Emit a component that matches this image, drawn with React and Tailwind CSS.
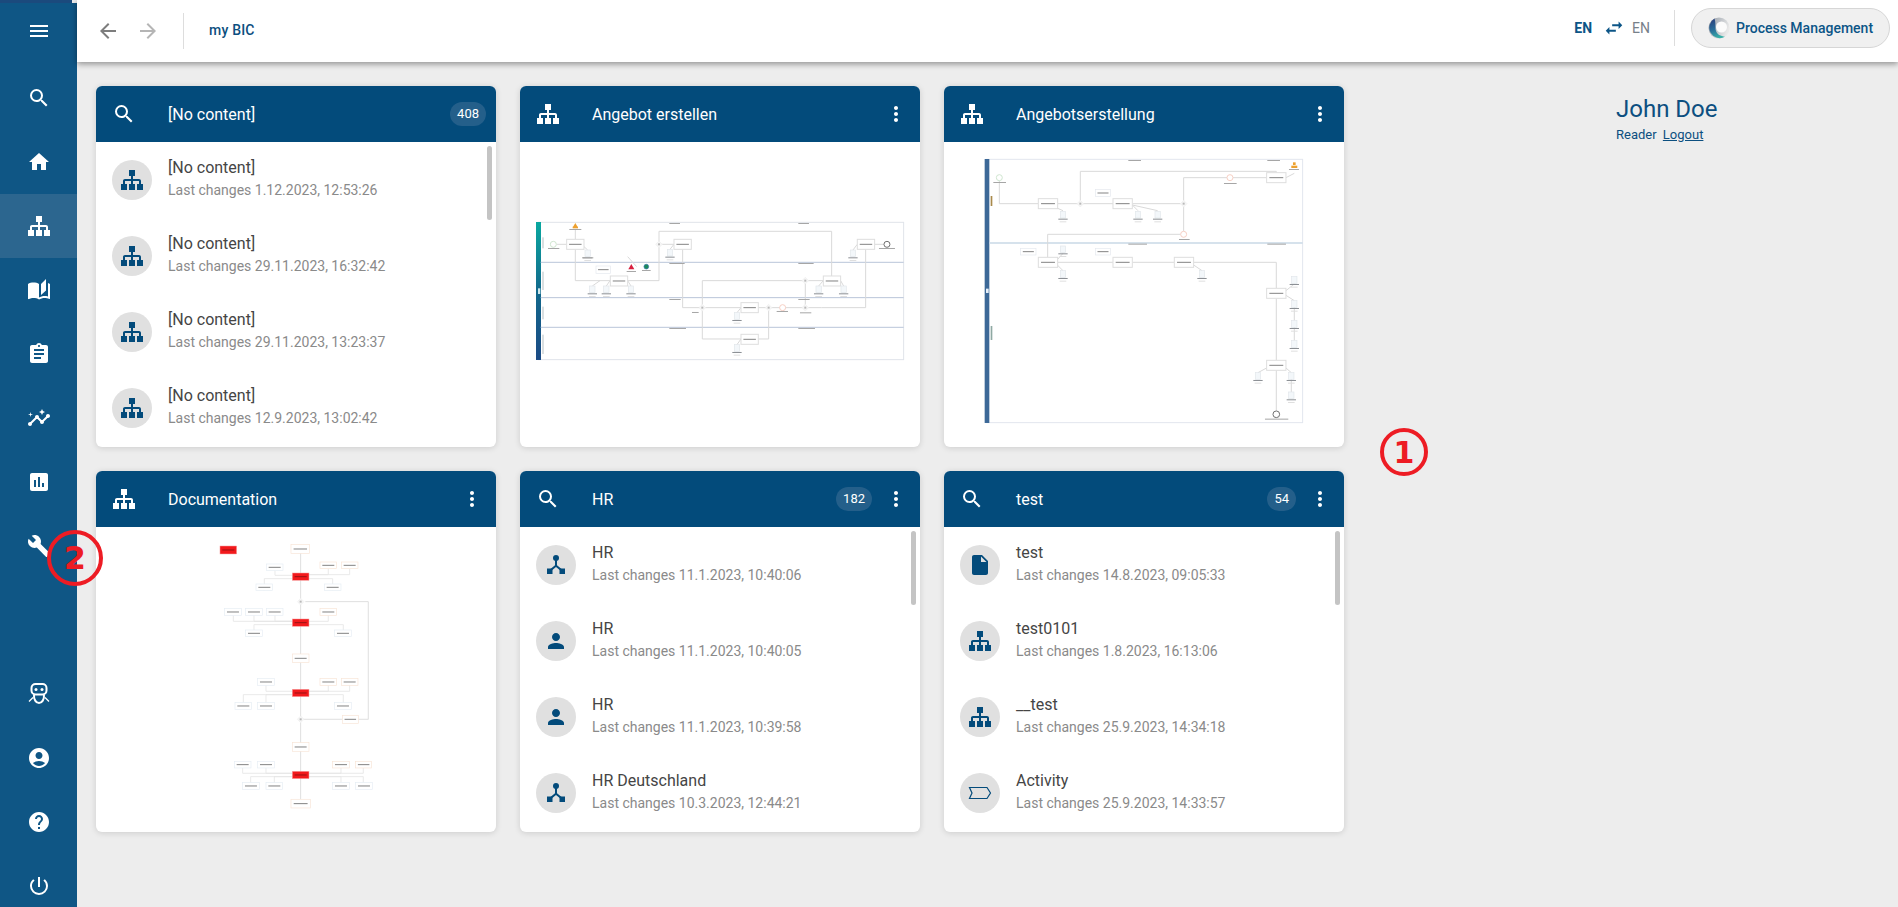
import React from 'react';
import {
  MdMenu, MdSearch, MdHome, MdAutoStories, MdAssignment, MdInsights, MdAssessment, MdBuild,
  MdAccountCircle, MdHelp, MdPowerSettingsNew, MdArrowBack, MdArrowForward, MdSwapHoriz,
  MdMoreVert, MdPerson, MdInsertDriveFile,
} from 'react-icons/md';

const SitemapIcon = ({ size = 24 }) => (
  <svg width={size} height={size} viewBox="0 0 24 24" fill="currentColor">
    <path d="M9,2V8H11V11H5C3.89,11 3,11.89 3,13V16H1V22H7V16H5V13H11V16H9V22H15V16H13V13H19V16H17V22H23V16H21V13C21,11.89 20.11,11 19,11H13V8H15V2H9Z" />
  </svg>
);

const OrgIcon = () => (
  <svg width="24" height="24" viewBox="0 0 24 24" fill="currentColor">
    <circle cx="12" cy="5" r="3" />
    <path d="M11 7h2v5.2l5.2 4.3-1.3 1.5L12 14l-4.9 4-1.3-1.5 5.2-4.3z" />
    <rect x="3" y="15.5" width="5.5" height="5.5" />
    <rect x="15.5" y="15.5" width="5.5" height="5.5" />
  </svg>
);

const ActivityIcon = () => (
  <svg width="24" height="24" viewBox="0 0 24 24" fill="none" stroke="currentColor" strokeWidth="1.2">
    <path d="M1.5 6.5H19l3.5 5.5-3.5 5.5H1.5L4 12z" />
  </svg>
);

const BotIcon = () => (
  <svg width="24" height="24" viewBox="0 0 24 24" fill="none" stroke="currentColor" strokeWidth="2">
    <rect x="4.500" y="2" width="15" height="10.500" rx="4" />
    <path d="M7 12.500c-.4 5 2 8.500 5 8.500s5.400-3.500 5-8.500" />
    <path d="M6 15.500l-4 4M18 15.500l4 4" strokeWidth="1.300" />
    <circle cx="9" cy="7.500" r="1.500" fill="currentColor" stroke="none" />
    <circle cx="15" cy="7.500" r="1.500" fill="currentColor" stroke="none" />
  </svg>
);

const Logo = () => (
  <svg width="22" height="22" viewBox="0 0 22 22">
    <defs>
      <linearGradient id="logoArc" x1="0.2" y1="0" x2="0.5" y2="1">
        <stop offset="0" stopColor="#2b3f7d" />
        <stop offset="0.55" stopColor="#2a6f9a" />
        <stop offset="1" stopColor="#37b0a8" />
      </linearGradient>
      <linearGradient id="logoTop" x1="0" y1="0" x2="1" y2="0.4">
        <stop offset="0" stopColor="#8f98a3" />
        <stop offset="1" stopColor="#e9e9e9" />
      </linearGradient>
    </defs>
    <circle cx="11" cy="11" r="10.500" fill="url(#logoTop)" />
    <circle cx="13.500" cy="10" r="5.500" fill="#fbfbfb" />
    <path d="M6.500 1.500A10.500 10.500 0 0 0 17 19.700C13 19 8.500 18 7.600 12.500 7.200 8.500 7.800 5 6.500 1.500z" fill="url(#logoArc)" />
  </svg>
);

const Lines = ({ items, color = '#d9d9d9', width = 3 }) => (
  <g fill="none" stroke={color} strokeWidth={width}>
    {items.map((points, i) => <polyline key={i} points={points} />)}
  </g>
);

const Task = ({ x, y, w, h, fill = '#fff', stroke = '#dedede', sw = 3, mark = '#5a5a5a' }) => (
  <g>
    <rect x={x} y={y} width={w} height={h} fill={fill} stroke={stroke} strokeWidth={sw} />
    <rect x={x + w * 0.14} y={y + h / 2 - 1.500} width={w * 0.72} height={3} fill={mark} opacity="0.75" />
  </g>
);

const Doc = ({ x, y }) => (
  <g>
    <rect x={x - 8} y={y - 10} width={16} height={20} fill="#f3f7fa" stroke="#e1e6ea" strokeWidth="2" />
    <rect x={x - 14} y={y + 12} width={28} height={3} fill="#8b8f94" />
    <rect x={x - 10} y={y + 20} width={20} height={3} fill="#dfdfdf" />
  </g>
);

const Node = ({ x, y, r = 9, stroke = '#cfe5cf' }) => (
  <circle cx={x} cy={y} r={r} fill="#fff" stroke={stroke} strokeWidth="3" />
);

const Gate = ({ x, y }) => (
  <g>
    <path d={`M${x} ${y - 10}L${x + 10} ${y}L${x} ${y + 10}L${x - 10} ${y}z`} fill="#f6f6f6" stroke="#eeeeee" strokeWidth="2" />
    <rect x={x - 3} y={y - 3} width="6" height="6" fill="#b9b9b9" />
  </g>
);

// thumbnails are drawn in 3x card pixels, so one scale + offset per card
const Thumb = ({ offsetX, offsetY, children }) => (
  <svg width="400" height="305" viewBox="0 0 400 305" className="block blur-[0.4px]">
    <g transform={`translate(${offsetX} ${offsetY}) scale(0.3333)`}>{children}</g>
  </svg>
);

const AngebotErstellen = () => (
  <Thumb offsetX={0} offsetY={-12}>
    <defs>
      <linearGradient id="laneBar" x1="0" y1="0" x2="0" y2="1">
        <stop offset="0" stopColor="#0aa8a0" />
        <stop offset="0.5" stopColor="#12698c" />
        <stop offset="1" stopColor="#1b4a85" />
      </linearGradient>
    </defs>
    <rect x="55" y="277" width="1096" height="412" fill="#fff" stroke="#e0e4ea" strokeWidth="3" />
    <rect x="48" y="276" width="15" height="414" fill="url(#laneBar)" />
    <rect x="54" y="475" width="7" height="17" fill="#cfe8ec" />
    <Lines color="#b9c5d9" items={['62,397 1151,397', '62,503 1151,503', '62,592 1151,592']} />
    <Lines items={[
      '110,343 140,343', '166,358 166,452 271,452', '323,452 417,452 417,304 935,304 935,438',
      '417,343 462,343', '488,358 488,533 547,533', '547,533 663,533', '547,533 547,627 663,627',
      '547,533 547,452 856,452 910,452', '715,533 788,533 905,533', '905,533 1037,533 1037,358',
      '715,627 746,627 746,533', '856,533 856,452', '1064,343 1092,343', '166,300 166,328',
      '323,380 350,410', '192,350 203,360', '217,468 240,452', '259,468 270,452', '333,468 323,452',
      '450,358 462,343', '651,548 663,533', '651,644 663,627', '896,468 910,452', '971,468 962,452', '999,360 1012,343',
    ]} />
    {[[140, 328], [462, 328], [1012, 328], [271, 438], [910, 438], [663, 518], [663, 613]].map(([x, y]) => (
      <Task key={`${x}-${y}`} x={x} y={y} w={52} h={30} />
    ))}
    <Task x={228} y={408} w={44} h={22} stroke="#e4e8ee" sw={2} />
    {[[203, 370], [217, 478], [259, 478], [333, 478], [450, 368], [651, 558], [651, 654], [896, 478], [971, 478], [999, 370]].map(([x, y]) => (
      <Doc key={`${x}-${y}`} x={x} y={y} />
    ))}
    <Node x={100} y={343} />
    <Node x={788} y={533} stroke="#f6cfc4" />
    <Node x={1101} y={343} stroke="#6f6f6f" />
    {[[417, 343], [547, 533], [746, 533], [856, 452], [856, 533]].map(([x, y]) => <Gate key={`${x}-${y}`} x={x} y={y} />)}
    <path d="M166 279l7 12h-14z" fill="#eda12f" />
    <rect x="158" y="290" width="16" height="5" fill="#eda12f" />
    <path d="M334 402l9 16h-18z" fill="#d8203f" />
    <circle cx="379" cy="410" r="7" fill="#1d8a5a" stroke="#2a6fa8" strokeWidth="2" />
    {[[84, 354, 34], [148, 297, 36], [186, 382, 34], [320, 423, 28], [366, 420, 26], [448, 279, 32], [835, 279, 32], [448, 399, 46], [835, 399, 46], [448, 507, 34], [835, 507, 34], [448, 594, 50], [835, 594, 50], [1077, 354, 48], [770, 543, 34], [840, 547, 34], [516, 546, 20]].map(([x, y, w]) => (
      <rect key={`${x}-${y}`} x={x} y={y} width={w} height={3} fill="#a6a6a6" />
    ))}
    {[[67, 322, 33], [67, 425, 55], [67, 530, 38], [67, 614, 58]].map(([x, y, h]) => (
      <rect key={`${x}-${y}`} x={x} y={y} width={4} height={h} fill="#c8d0d2" />
    ))}
  </Thumb>
);

const Angebotserstellung = () => (
  <Thumb offsetX={6} offsetY={-2}>
    <rect x="110" y="58" width="948" height="790" fill="#fff" stroke="#e2e6ee" strokeWidth="3" />
    <rect x="104" y="57" width="14" height="792" fill="#3c6897" />
    <rect x="108" y="446" width="8" height="13" fill="#e7eff8" />
    <Lines color="#c9d8e6" width={5} items={['118,309 1058,309']} />
    <Lines items={[
      '148,122 148,191 265,191', '323,191 489,191', '391,191 391,94 979,94 979,98',
      '547,191 701,191 701,113 950,113', '701,191 701,274', '692,283 293,283 293,352',
      '323,367 489,367', '547,367 673,367', '731,367 979,367 979,445', '979,475 979,661',
      '979,691 979,812', '1008,113 1033,100', '323,205 339,212', '547,195 564,212', '547,195 623,212',
      '323,358 339,340', '323,376 339,392', '731,375 756,392', '1008,452 1033,432', '1008,466 1033,482',
      '1033,500 1033,542', '1033,560 1033,602', '950,684 924,698', '1008,684 1024,698', '1024,716 1024,756',
    ]} />
    {[[265, 176], [489, 176], [950, 98], [265, 352], [489, 352], [673, 352], [950, 445], [950, 661]].map(([x, y]) => (
      <Task key={`${x}-${y}`} x={x} y={y} w={58} h={30} />
    ))}
    {[[436, 149], [212, 325], [436, 325]].map(([x, y]) => (
      <Task key={`${x}-${y}`} x={x} y={y} w={46} h={20} stroke="#e4e8ee" sw={2} />
    ))}
    {[[339, 224], [564, 224], [623, 224], [339, 328], [339, 402], [756, 402], [1033, 420], [1033, 492], [1033, 552], [1033, 612], [924, 708], [1024, 708], [1024, 766]].map(([x, y]) => (
      <Doc key={`${x}-${y}`} x={x} y={y} />
    ))}
    <Node x={148} y={113} />
    <Node x={840} y={113} stroke="#f6cfc4" />
    <Node x={701} y={283} stroke="#f6cfc4" />
    <Node x={979} y={823} r={10} stroke="#6f6f6f" />
    <Gate x={391} y={191} />
    <Gate x={701} y={191} />
    <rect x="1029" y="67" width="8" height="8" fill="#eda12f" />
    <rect x="1024" y="77" width="18" height="7" fill="#eda12f" />
    {[[130, 126, 38], [822, 129, 38], [687, 297, 32], [1017, 87, 30], [535, 60, 38], [952, 60, 38], [535, 311, 56], [952, 311, 56], [945, 836, 70]].map(([x, y, w]) => (
      <rect key={`${x}-${y}`} x={x} y={y} width={w} height={3} fill="#a6a6a6" />
    ))}
    <rect x="122" y="168" width="5" height="30" fill="#a98a4b" />
    <rect x="122" y="558" width="5" height="42" fill="#8fa9a3" />
  </Thumb>
);

const docBlue = '#e6edf4';
const docOrange = '#f8e4d6';

const Documentation = () => (
  <Thumb offsetX={4} offsetY={-57}>
    <Lines width={2.500} items={['602,250 602,988', '616,395 805,395 805,748 775,748', '602,748 727,748']} />
    <Lines color="#e6e6e6" width={2.500} items={[
      '525,302 525,316 577,316', '493,362 493,326 577,326', '698,362 698,326 627,326', '685,296 685,314 627,314', '749,296 749,314 627,314',
      '400,436 400,454 577,454', '462,436 462,454 577,454', '525,436 525,454 577,454', '685,436 685,454 627,454', '462,480 462,464 577,464', '730,480 730,464 627,464',
      '498,646 498,664 577,664', '685,646 685,664 627,664', '749,646 749,664 627,664', '430,698 430,674 577,674', '498,698 498,674 577,674', '730,698 730,674 627,674',
      '428,894 428,910 577,910', '498,894 498,910 577,910', '723,894 723,910 627,910', '790,894 790,910 627,910', '452,938 452,920 577,920', '523,938 523,920 577,920', '723,938 723,920 627,920', '790,938 790,920 627,920',
    ]} />
    {[[360, 228, 50, 24], [577, 309, 50, 22], [577, 447, 50, 22], [577, 658, 50, 22], [577, 904, 50, 22]].map(([x, y, w, h]) => (
      <Task key={`${x}-${y}`} x={x} y={y} w={w} h={h} fill="#f2191c" stroke="#f7a3a3" sw={1.500} mark="#7a1010" />
    ))}
    {[[499, 282], [468, 342], [673, 342], [374, 416], [437, 416], [499, 416], [437, 480], [704, 480], [473, 626], [405, 698], [473, 698], [704, 698], [403, 874], [473, 874], [428, 938], [498, 938], [698, 938], [767, 938]].map(([x, y]) => (
      <Task key={`${x}-${y}`} x={x} y={y} w={50} h={20} stroke={docBlue} sw={2} />
    ))}
    {[[660, 276, 50, 20], [724, 276, 50, 20], [660, 416, 50, 20], [660, 626, 50, 20], [724, 626, 50, 20], [698, 874, 50, 20], [767, 874, 48, 20], [727, 736, 48, 24], [573, 224, 56, 26], [577, 552, 50, 26], [577, 818, 50, 26], [573, 988, 58, 26]].map(([x, y, w, h]) => (
      <Task key={`${x}-${y}`} x={x} y={y} w={w} h={h} stroke={docOrange} sw={2} />
    ))}
    <Gate x={602} y={395} />
    <Gate x={602} y={748} />
  </Thumb>
);

const Row = ({ icon, title, date }) => (
  <div className="flex h-[76px] items-center shrink-0 pl-4">
    <div className="flex h-10 w-10 shrink-0 items-center justify-center rounded-full bg-[#e0e0e0] text-[#034b7b]">{icon}</div>
    <div className="-mt-1 ml-4">
      <div className="text-base leading-6 text-[#454545]">{title}</div>
      <div className="text-sm leading-5 text-[#8a8a8a]">Last changes {date}</div>
    </div>
  </div>
);

const Card = ({ icon, title, count, menu = true, rows, children }) => (
  <div className="relative flex h-[361px] flex-col overflow-hidden rounded-md bg-white shadow-[0_1px_6px_rgba(0,0,0,0.14)]">
    <div className="flex h-14 shrink-0 items-center bg-[#034b7b] pl-4 pr-3 text-white">
      <div className="w-6">{icon}</div>
      <div className="ml-8 flex-1 pt-0.5 text-base">{title}</div>
      {count && (
        <div className={`flex h-6 items-center justify-center rounded-full bg-[#245f8a] px-[7px] text-[13px] ${menu ? '' : '-mr-0.5'}`}>{count}</div>
      )}
      {menu && <MdMoreVert size={24} className="ml-3" />}
    </div>
    {rows && (
      <div className="flex-1">
        {rows.map((row) => <Row key={row.title + row.date} {...row} />)}
        <div className="absolute right-1 top-[60px] h-[74px] w-[5px] rounded bg-[#c4c4c4]" />
      </div>
    )}
    {children}
  </div>
);

const navTop = [
  { icon: <MdSearch size={24} /> },
  { icon: <MdHome size={24} /> },
  { icon: <SitemapIcon />, active: true },
  { icon: <MdAutoStories size={24} /> },
  { icon: <MdAssignment size={24} /> },
  { icon: <MdInsights size={24} /> },
  { icon: <MdAssessment size={24} /> },
  { icon: <MdBuild size={24} /> },
];

const navBottom = [
  <BotIcon key="bot" />,
  <MdAccountCircle key="user" size={24} />,
  <MdHelp key="help" size={24} />,
  <MdPowerSettingsNew key="power" size={24} />,
];

const NavItem = ({ icon, active }) => (
  <div className={`flex h-16 items-center justify-center text-white ${active ? 'bg-[#2c668f]' : ''}`}>{icon}</div>
);

const Sidebar = () => (
  <div className="flex h-full w-[77px] shrink-0 flex-col">
    <div className="h-[3px] w-[72px] shrink-0 bg-[#1b4a7d]" />
    <div className="flex-1 overflow-hidden bg-[#0f5685]">
      <div className="flex h-[63px] items-center justify-center pb-[7px] text-white"><MdMenu size={24} /></div>
      {navTop.map((item, i) => <NavItem key={i} {...item} />)}
      <div className="h-[84px]" />
      {navBottom.map((icon) => <NavItem key={icon.key} icon={icon} />)}
    </div>
  </div>
);

const TopBar = () => (
  <div className="relative z-10 flex h-[62px] shrink-0 items-center bg-white pl-[19px] pr-2 shadow-[0_2px_6px_rgba(0,0,0,0.4)]">
    <MdArrowBack size={24} className="text-[#7d7d7d]" />
    <MdArrowForward size={24} className="ml-4 text-[#b5b5b5]" />
    <div className="ml-[23px] h-9 w-px bg-[#dddddd]" />
    <div className="ml-[25px] -mt-0.5 text-sm font-medium tracking-[0.2px] text-[#0c4f80]">my BIC</div>
    <div className="mb-[6px] ml-auto flex items-center">
      <div className="text-sm font-bold text-[#0c5587]">EN</div>
      <MdSwapHoriz size={22} className="ml-[11px] text-[#0c5587]" />
      <div className="ml-[7px] text-sm text-[#77808a]">EN</div>
      <div className="ml-6 h-9 w-px bg-[#dddddd]" />
      <div className="ml-4 flex h-10 w-[199px] items-center rounded-full border border-[#d6d6d6] bg-[#f0f0f0] pl-4 text-sm font-medium text-[#0c5587]">
        <Logo />
        <span className="ml-1.5">Process Management</span>
      </div>
    </div>
  </div>
);

const search = <MdSearch size={24} />;
const sitemap = <SitemapIcon />;
const org = <OrgIcon />;
const person = <MdPerson size={24} />;

export default function App() {
  return (
    <div className="relative flex h-[907px] w-full overflow-hidden bg-[#ededed] font-['Roboto',sans-serif]">
      <Sidebar />
      <div className="flex min-w-0 flex-1 flex-col">
        <TopBar />
        <div className="flex flex-1 pl-[19px] pt-6">
          <div className="grid w-[1248px] grid-cols-3 content-start gap-6">
            <Card
              icon={search}
              title="[No content]"
              count="408"
              menu={false}
              rows={[
                { icon: sitemap, title: '[No content]', date: '1.12.2023, 12:53:26' },
                { icon: sitemap, title: '[No content]', date: '29.11.2023, 16:32:42' },
                { icon: sitemap, title: '[No content]', date: '29.11.2023, 13:23:37' },
                { icon: sitemap, title: '[No content]', date: '12.9.2023, 13:02:42' },
              ]}
            />
            <Card icon={sitemap} title="Angebot erstellen"><AngebotErstellen /></Card>
            <Card icon={sitemap} title="Angebotserstellung"><Angebotserstellung /></Card>
            <Card icon={sitemap} title="Documentation"><Documentation /></Card>
            <Card
              icon={search}
              title="HR"
              count="182"
              rows={[
                { icon: org, title: 'HR', date: '11.1.2023, 10:40:06' },
                { icon: person, title: 'HR', date: '11.1.2023, 10:40:05' },
                { icon: person, title: 'HR', date: '11.1.2023, 10:39:58' },
                { icon: org, title: 'HR Deutschland', date: '10.3.2023, 12:44:21' },
              ]}
            />
            <Card
              icon={search}
              title="test"
              count="54"
              rows={[
                { icon: <MdInsertDriveFile size={24} />, title: 'test', date: '14.8.2023, 09:05:33' },
                { icon: sitemap, title: 'test0101', date: '1.8.2023, 16:13:06' },
                { icon: sitemap, title: '__test', date: '25.9.2023, 14:34:18' },
                { icon: <ActivityIcon />, title: 'Activity', date: '25.9.2023, 14:33:57' },
              ]}
            />
          </div>
          <div className="ml-[272px] pt-[5px] text-[#0c4f80]">
            <div className="text-2xl leading-9">John Doe</div>
            <div className="text-[13px] leading-4">
              Reader <a className="ml-[3px] underline">Logout</a>
            </div>
          </div>
        </div>
      </div>
      {/* callouts pasted over the screenshot */}
      <div className="absolute left-[1380px] top-[428px] flex h-12 w-12 items-center justify-center rounded-full border-4 border-[#ed1c24] font-['DejaVu_Sans',sans-serif] text-[30px] font-bold text-[#ed1c24]">1</div>
      <div className="absolute left-[47px] top-[530px] flex h-14 w-14 items-center justify-center rounded-full border-4 border-[#ed1c24] font-['DejaVu_Sans',sans-serif] text-[32px] font-bold text-[#ed1c24]">2</div>
    </div>
  );
}
